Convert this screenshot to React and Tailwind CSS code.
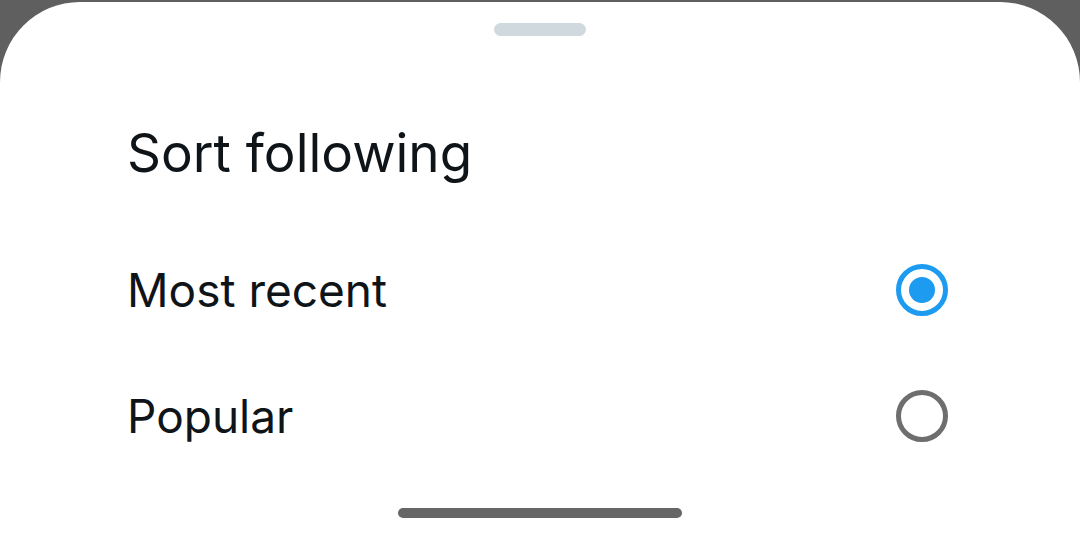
import { useState } from 'react';

const options = [
  { id: 'recent', label: 'Most recent' },
  { id: 'popular', label: 'Popular' },
];

const Radio = ({ checked }) => (
  <span
    className={`flex items-center justify-center w-[52px] h-[52px] rounded-full border-[5px] ${
      checked ? 'border-[#1d9bf0]' : 'border-[#6e6e6e]'
    }`}
  >
    {checked && <span className="w-[26px] h-[26px] rounded-full bg-[#1d9bf0]" />}
  </span>
);

const App = () => {
  const [sort, setSort] = useState('recent');

  return (
    <div className="h-[544px] bg-[#5f5f5f] pt-[2px] font-['Inter',sans-serif] text-[#0f1419]">
      <div className="h-[542px] bg-white rounded-t-[80px] flex flex-col">
        {/* Drag handle */}
        <div className="flex justify-center pt-[21px]">
          <div className="w-[92px] h-[13px] rounded-full bg-[#cfd9de]" />
        </div>

        <h2 className="pl-[127px] mt-[87px] text-[53px] leading-[60px]">Sort following</h2>

        <div className="mt-[44px] flex flex-col">
          {options.map((opt) => (
            <button
              key={opt.id}
              onClick={() => setSort(opt.id)}
              className="flex items-center justify-between pl-[127px] pr-[132px] h-[126px] text-left"
            >
              <span className="text-[46px] leading-none">{opt.label}</span>
              <Radio checked={sort === opt.id} />
            </button>
          ))}
        </div>

        {/* Home indicator */}
        <div className="mt-auto flex justify-center pb-[26px]">
          <div className="w-[284px] h-[10px] rounded-full bg-[#666666]" />
        </div>
      </div>
    </div>
  );
};

export default App;
